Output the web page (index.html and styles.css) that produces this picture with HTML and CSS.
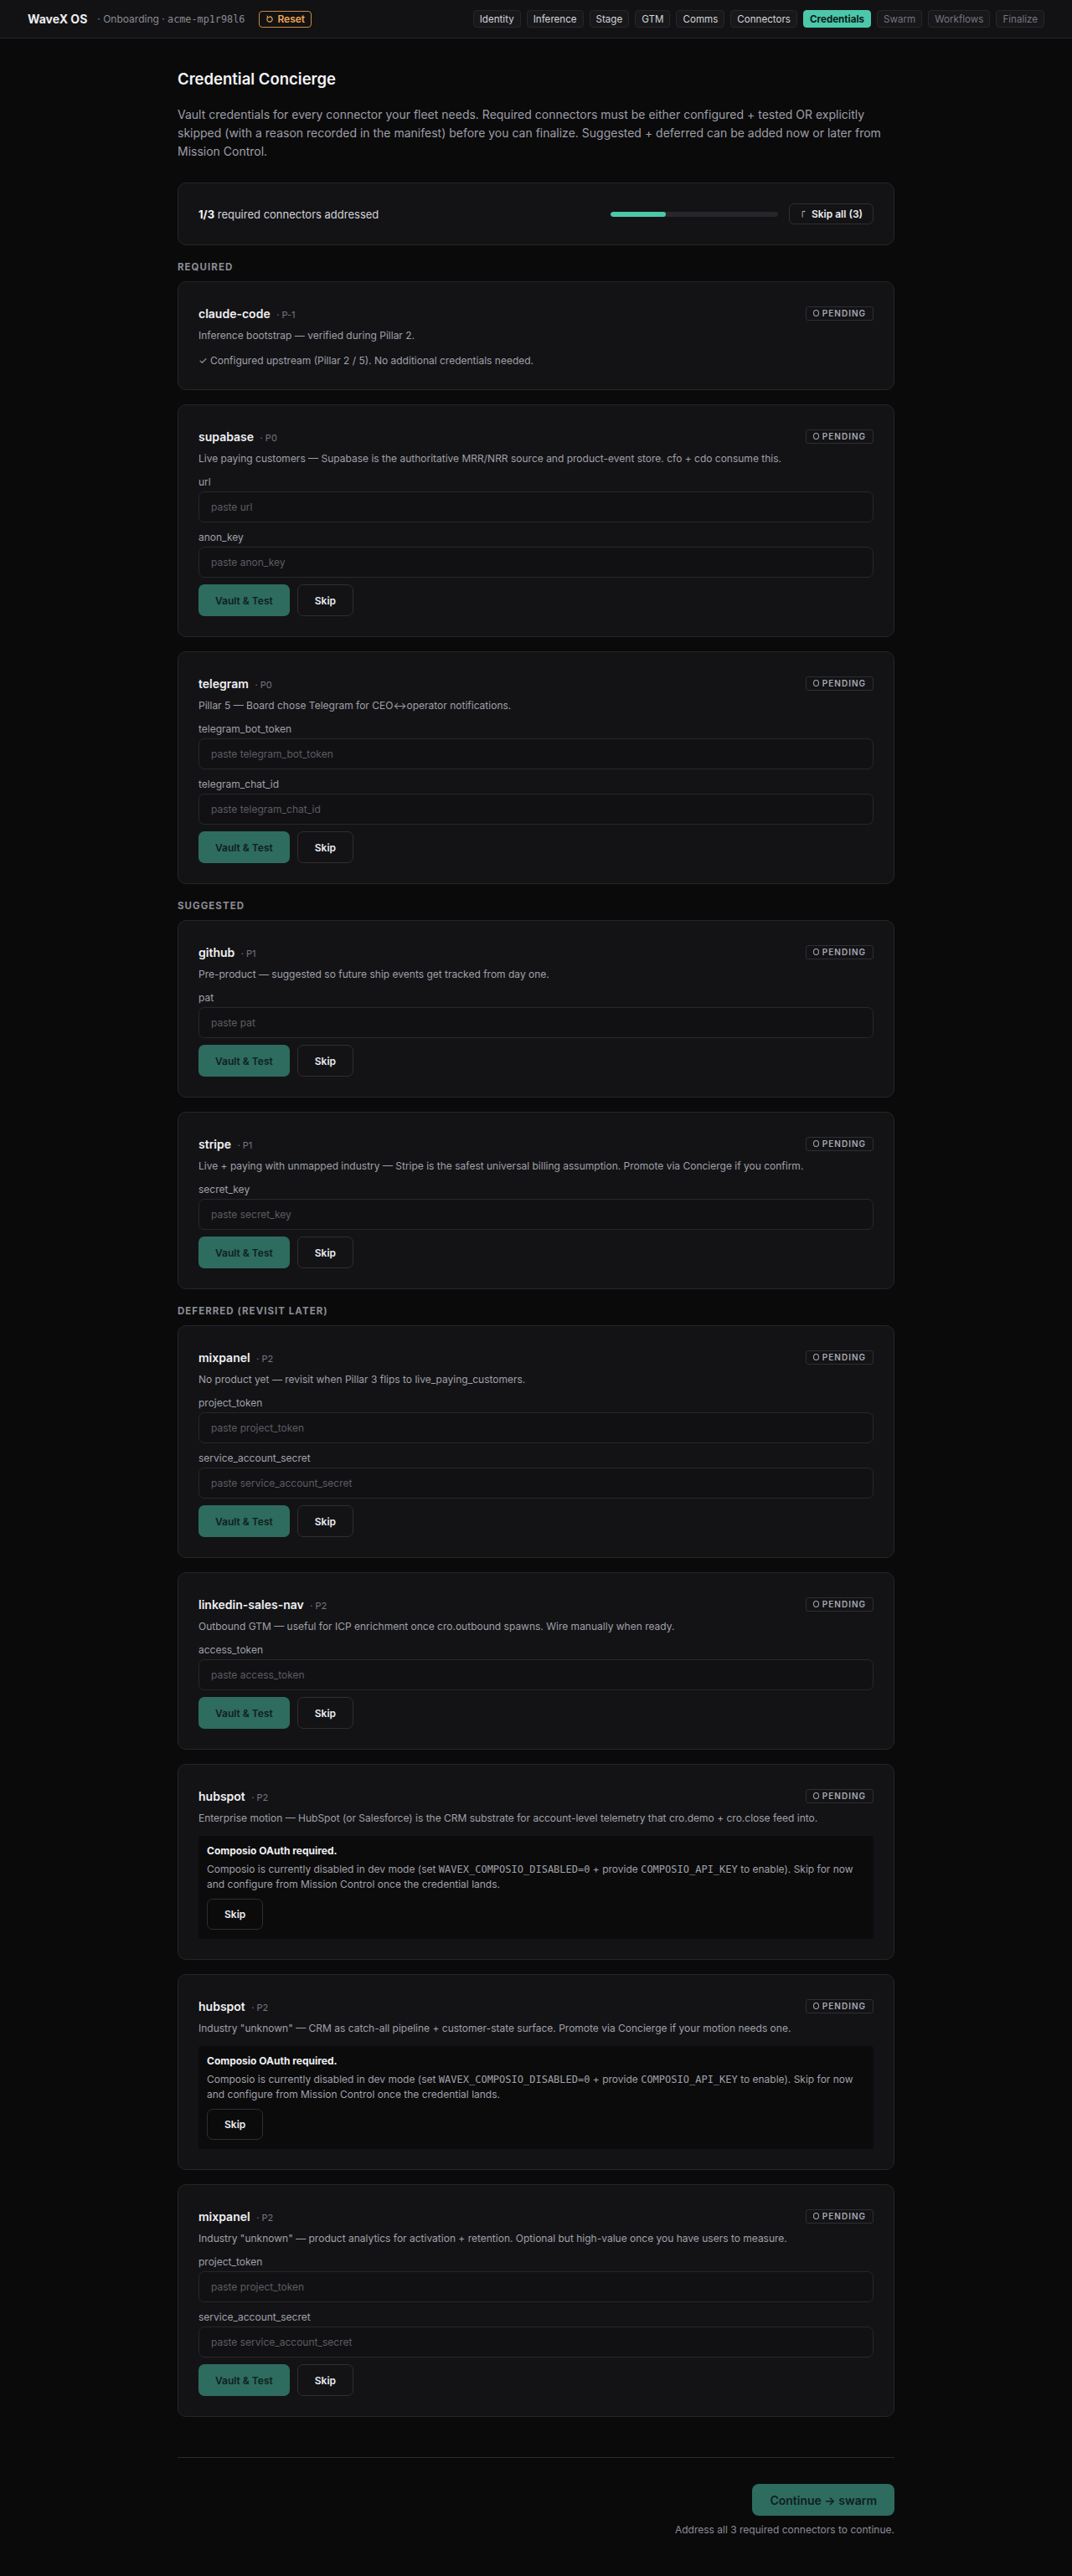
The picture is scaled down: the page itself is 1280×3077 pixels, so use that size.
FILE: index.html
```html
<!DOCTYPE html>
<html lang="en">
<head>
<meta charset="utf-8">
<title>WaveX OS · Onboarding</title>
<link rel="stylesheet" href="styles.css">
</head>
<body>
<header class="topbar">
  <div class="brand">
    <span class="brand-name">WaveX OS</span>
    <span class="brand-sub">· Onboarding · <span class="mono">acme-mp1r98l6</span></span>
    <button class="reset-btn"><svg class="reset-ico" viewBox="0 0 12 12" width="10" height="10"><path d="M3.2 3.4 A3.8 3.8 0 1 0 6 2.2" fill="none" stroke="currentColor" stroke-width="1.4" stroke-linecap="round"/><path d="M2.4 1.2 L3.4 3.6 L5.8 3" fill="none" stroke="currentColor" stroke-width="1.3" stroke-linecap="round" stroke-linejoin="round"/></svg>Reset</button>
  </div>
  <nav class="steps">
    <span class="step done">Identity</span>
    <span class="step done">Inference</span>
    <span class="step done">Stage</span>
    <span class="step done">GTM</span>
    <span class="step done">Comms</span>
    <span class="step done">Connectors</span>
    <span class="step active">Credentials</span>
    <span class="step future">Swarm</span>
    <span class="step future">Workflows</span>
    <span class="step future">Finalize</span>
  </nav>
</header>

<main class="page">
  <h1 class="title">Credential Concierge</h1>
  <p class="intro">Vault credentials for every connector your fleet needs. Required connectors must be either configured + tested OR explicitly skipped (with a reason recorded in the manifest) before you can finalize. Suggested + deferred can be added now or later from Mission Control.</p>

  <section class="progress-card">
    <div class="progress-text"><strong>1/3</strong> required connectors addressed</div>
    <div class="progress-right">
      <div class="bar"><div class="bar-fill" style="width: 33%"></div></div>
      <button class="skip-all"><svg viewBox="0 0 8 12" width="6" height="11"><path d="M1.5 11.5 V2 H4" fill="none" stroke="currentColor" stroke-width="1.2"/><path d="M4 0.6 L6.4 2 L4 3.4 Z" fill="currentColor"/></svg>Skip all (3)</button>
    </div>
  </section>

  <h2 class="section-label">Required</h2>
  <div class="card-list">
    <article class="card">
      <div class="card-head"><div class="card-title">claude-code <span class="prio">· P-1</span></div><span class="badge"><i class="ring"></i>PENDING</span></div>
      <p class="card-desc">Inference bootstrap — verified during Pillar 2.</p>
      <p class="card-note">✓ Configured upstream (Pillar 2 / 5). No additional credentials needed.</p>
    </article>

    <article class="card">
      <div class="card-head"><div class="card-title">supabase <span class="prio">· P0</span></div><span class="badge"><i class="ring"></i>PENDING</span></div>
      <p class="card-desc">Live paying customers — Supabase is the authoritative MRR/NRR source and product-event store. cfo + cdo consume this.</p>
      <label class="field"><span class="field-label">url</span><input class="field-input" placeholder="paste url"></label>
      <label class="field"><span class="field-label">anon_key</span><input class="field-input" placeholder="paste anon_key"></label>
      <div class="actions"><button class="btn-primary">Vault &amp; Test</button><button class="btn-ghost">Skip</button></div>
    </article>

    <article class="card">
      <div class="card-head"><div class="card-title">telegram <span class="prio">· P0</span></div><span class="badge"><i class="ring"></i>PENDING</span></div>
      <p class="card-desc">Pillar 5 — Board chose Telegram for CEO↔operator notifications.</p>
      <label class="field"><span class="field-label">telegram_bot_token</span><input class="field-input" placeholder="paste telegram_bot_token"></label>
      <label class="field"><span class="field-label">telegram_chat_id</span><input class="field-input" placeholder="paste telegram_chat_id"></label>
      <div class="actions"><button class="btn-primary">Vault &amp; Test</button><button class="btn-ghost">Skip</button></div>
    </article>
  </div>

  <h2 class="section-label">Suggested</h2>
  <div class="card-list">
    <article class="card">
      <div class="card-head"><div class="card-title">github <span class="prio">· P1</span></div><span class="badge"><i class="ring"></i>PENDING</span></div>
      <p class="card-desc">Pre-product — suggested so future ship events get tracked from day one.</p>
      <label class="field"><span class="field-label">pat</span><input class="field-input" placeholder="paste pat"></label>
      <div class="actions"><button class="btn-primary">Vault &amp; Test</button><button class="btn-ghost">Skip</button></div>
    </article>

    <article class="card">
      <div class="card-head"><div class="card-title">stripe <span class="prio">· P1</span></div><span class="badge"><i class="ring"></i>PENDING</span></div>
      <p class="card-desc">Live + paying with unmapped industry — Stripe is the safest universal billing assumption. Promote via Concierge if you confirm.</p>
      <label class="field"><span class="field-label">secret_key</span><input class="field-input" placeholder="paste secret_key"></label>
      <div class="actions"><button class="btn-primary">Vault &amp; Test</button><button class="btn-ghost">Skip</button></div>
    </article>
  </div>

  <h2 class="section-label">Deferred (revisit later)</h2>
  <div class="card-list">
    <article class="card">
      <div class="card-head"><div class="card-title">mixpanel <span class="prio">· P2</span></div><span class="badge"><i class="ring"></i>PENDING</span></div>
      <p class="card-desc">No product yet — revisit when Pillar 3 flips to live_paying_customers.</p>
      <label class="field"><span class="field-label">project_token</span><input class="field-input" placeholder="paste project_token"></label>
      <label class="field"><span class="field-label">service_account_secret</span><input class="field-input" placeholder="paste service_account_secret"></label>
      <div class="actions"><button class="btn-primary">Vault &amp; Test</button><button class="btn-ghost">Skip</button></div>
    </article>

    <article class="card">
      <div class="card-head"><div class="card-title">linkedin-sales-nav <span class="prio">· P2</span></div><span class="badge"><i class="ring"></i>PENDING</span></div>
      <p class="card-desc">Outbound GTM — useful for ICP enrichment once cro.outbound spawns. Wire manually when ready.</p>
      <label class="field"><span class="field-label">access_token</span><input class="field-input" placeholder="paste access_token"></label>
      <div class="actions"><button class="btn-primary">Vault &amp; Test</button><button class="btn-ghost">Skip</button></div>
    </article>

    <article class="card">
      <div class="card-head"><div class="card-title">hubspot <span class="prio">· P2</span></div><span class="badge"><i class="ring"></i>PENDING</span></div>
      <p class="card-desc">Enterprise motion — HubSpot (or Salesforce) is the CRM substrate for account-level telemetry that cro.demo + cro.close feed into.</p>
      <div class="oauth">
        <div class="oauth-title">Composio OAuth required.</div>
        <p class="oauth-text">Composio is currently disabled in dev mode (set <code>WAVEX_COMPOSIO_DISABLED=0</code> + provide <code>COMPOSIO_API_KEY</code> to enable). Skip for now<br>and configure from Mission Control once the credential lands.</p>
        <button class="btn-ghost">Skip</button>
      </div>
    </article>

    <article class="card">
      <div class="card-head"><div class="card-title">hubspot <span class="prio">· P2</span></div><span class="badge"><i class="ring"></i>PENDING</span></div>
      <p class="card-desc">Industry "unknown" — CRM as catch-all pipeline + customer-state surface. Promote via Concierge if your motion needs one.</p>
      <div class="oauth">
        <div class="oauth-title">Composio OAuth required.</div>
        <p class="oauth-text">Composio is currently disabled in dev mode (set <code>WAVEX_COMPOSIO_DISABLED=0</code> + provide <code>COMPOSIO_API_KEY</code> to enable). Skip for now<br>and configure from Mission Control once the credential lands.</p>
        <button class="btn-ghost">Skip</button>
      </div>
    </article>

    <article class="card">
      <div class="card-head"><div class="card-title">mixpanel <span class="prio">· P2</span></div><span class="badge"><i class="ring"></i>PENDING</span></div>
      <p class="card-desc">Industry "unknown" — product analytics for activation + retention. Optional but high-value once you have users to measure.</p>
      <label class="field"><span class="field-label">project_token</span><input class="field-input" placeholder="paste project_token"></label>
      <label class="field"><span class="field-label">service_account_secret</span><input class="field-input" placeholder="paste service_account_secret"></label>
      <div class="actions"><button class="btn-primary">Vault &amp; Test</button><button class="btn-ghost">Skip</button></div>
    </article>
  </div>

  <footer class="footer">
    <button class="btn-continue">Continue → swarm</button>
    <p class="footer-hint">Address all 3 required connectors to continue.</p>
  </footer>
</main>
</body>
</html>
```

FILE: styles.css
```css
* { box-sizing: border-box; }
html, body { margin: 0; padding: 0; }
body {
  background: #0a0a0b;
  color: #e4e4e7;
  font-family: Inter, "Noto Sans", "Liberation Sans", sans-serif;
  font-size: 12px;
}
button { font-family: inherit; cursor: pointer; }
p { margin: 0; }
.mono, code { font-family: "DejaVu Sans Mono", "Liberation Mono", monospace; }

.topbar {
  height: 46px;
  background: #121214;
  border-bottom: 1px solid #26262a;
  display: flex;
  align-items: center;
  justify-content: space-between;
  padding: 0 33px 0 33px;
}
.brand { display: flex; align-items: center; }
.brand-name { font-size: 14px; font-weight: 700; color: #ededf0; }
.brand-sub { font-size: 12px; color: #8b8b93; margin-left: 12px; }
.brand-sub .mono { font-size: 11.8px; }
.reset-btn {
  margin-left: 17px;
  height: 20px;
  padding: 0 7px;
  border: 1px solid #c98a3e;
  border-radius: 4px;
  background: transparent;
  color: #eea653;
  font-size: 12px;
  font-weight: 600;
  display: inline-flex;
  align-items: center;
  gap: 4px;
}
.reset-ico { display: block; }

.steps { display: flex; gap: 7px; }
.step {
  height: 21px;
  padding: 0 7px;
  display: inline-flex;
  align-items: center;
  font-size: 11.6px;
  border-radius: 4px;
  background: #18181b;
  border: 1px solid #27272a;
}
.step.done { color: #d4d4d8; }
.step.future { color: #75757d; }
.step.active { background: #4cc7aa; border-color: #4cc7aa; color: #0a1a16; font-weight: 700; }

.page { width: 856px; margin: 0 auto; padding: 34px 0 44px; }
.title { margin: 0; font-size: 18.5px; font-weight: 600; color: #f4f4f5; line-height: 28px; }
.intro { margin-top: 18px; font-size: 14px; line-height: 22px; color: #9e9ea6; }

.progress-card {
  margin-top: 26px;
  background: #131316;
  border: 1px solid #26262a;
  border-radius: 10px;
  padding: 24px;
  display: flex;
  align-items: center;
  justify-content: space-between;
}
.progress-text { font-size: 13px; color: #d4d4d8; }
.progress-text strong { color: #f4f4f5; font-weight: 700; }
.progress-right { display: flex; align-items: center; gap: 13px; }
.bar { width: 200px; height: 6px; border-radius: 3px; background: #27272b; overflow: hidden; }
.bar-fill { height: 100%; background: #4cc7aa; border-radius: 3px; }
.skip-all {
  height: 25px;
  padding: 0 12px 0 14px;
  border: 1px solid #2e2e33;
  border-radius: 6px;
  background: transparent;
  color: #ececef;
  font-size: 12px;
  font-weight: 600;
  display: inline-flex;
  align-items: center;
  gap: 6px;
}
.skip-all svg { color: #bdbdc4; display: block; }

.section-label {
  margin: 18px 0 9px;
  font-size: 11.5px;
  line-height: 16px;
  font-weight: 700;
  letter-spacing: 0.09em;
  text-transform: uppercase;
  color: #8c8c94;
}

.card-list { display: flex; flex-direction: column; gap: 17px; }
.card {
  background: #131316;
  border: 1px solid #26262a;
  border-radius: 10px;
  padding: 24px;
}
.card-head { display: flex; align-items: center; justify-content: space-between; min-height: 26px; }
.card-title { font-size: 14px; font-weight: 600; color: #f0f0f2; }
.prio { font-size: 11px; font-weight: 400; color: #76767e; margin-left: 4px; }
.badge {
  display: inline-flex;
  align-items: center;
  gap: 4px;
  height: 17px;
  padding: 0 8px;
  border: 1px solid #2e2e33;
  border-radius: 3px;
  font-size: 10px;
  font-weight: 600;
  letter-spacing: 0.1em;
  color: #a8a8b0;
}
.ring { width: 7px; height: 8px; border: 1.2px solid #a8a8b0; border-radius: 50%; display: inline-block; }
.card-desc { margin-top: 4px; font-size: 12px; line-height: 20px; color: #a0a0a8; }
.card-note { margin-top: 10px; font-size: 12px; line-height: 20px; color: #a0a0a8; }

.field { display: block; margin-top: 10px; }
.field-label { display: block; font-size: 12px; line-height: 16px; color: #a0a0a8; margin-bottom: 3px; }
.field-input {
  display: block;
  width: 100%;
  height: 37px;
  background: #111113;
  border: 1px solid #28282c;
  border-radius: 7px;
  padding: 0 14px;
  font-family: inherit;
  font-size: 12px;
  color: #e4e4e7;
  outline: none;
}
.field-input::placeholder { color: #5c5c64; }

.actions { display: flex; gap: 9px; margin-top: 8px; }
.btn-primary {
  height: 38px;
  padding: 0 20px;
  border: none;
  border-radius: 7px;
  background: #2d6c5f;
  color: #10201c;
  font-size: 12px;
  font-weight: 600;
}
.btn-ghost {
  height: 38px;
  padding: 0 20px;
  border: 1px solid #2e2e33;
  border-radius: 7px;
  background: transparent;
  color: #ececef;
  font-size: 12px;
  font-weight: 600;
}

.oauth {
  margin-top: 11px;
  background: #0b0b0c;
  border-radius: 4px;
  padding: 10px 10px 11px;
}
.oauth-title { font-size: 12px; line-height: 16px; font-weight: 700; color: #f0f0f2; }
.oauth-text { margin-top: 5px; font-size: 12px; line-height: 18px; color: #a0a0a8; }
.oauth-text code { font-size: 12px; line-height: 18px; }
.oauth .btn-ghost { margin-top: 8px; height: 37px; }

.footer {
  margin-top: 48px;
  border-top: 1px solid #2a2a2e;
  padding-top: 31px;
  display: flex;
  flex-direction: column;
  align-items: flex-end;
}
.btn-continue {
  height: 38px;
  padding: 0 21px;
  border: none;
  border-radius: 8px;
  background: #2d6c5f;
  color: #10201c;
  font-size: 14px;
  font-weight: 600;
}
.footer-hint { margin-top: 7px; font-size: 12px; line-height: 20px; color: #8c8c94; }
```
